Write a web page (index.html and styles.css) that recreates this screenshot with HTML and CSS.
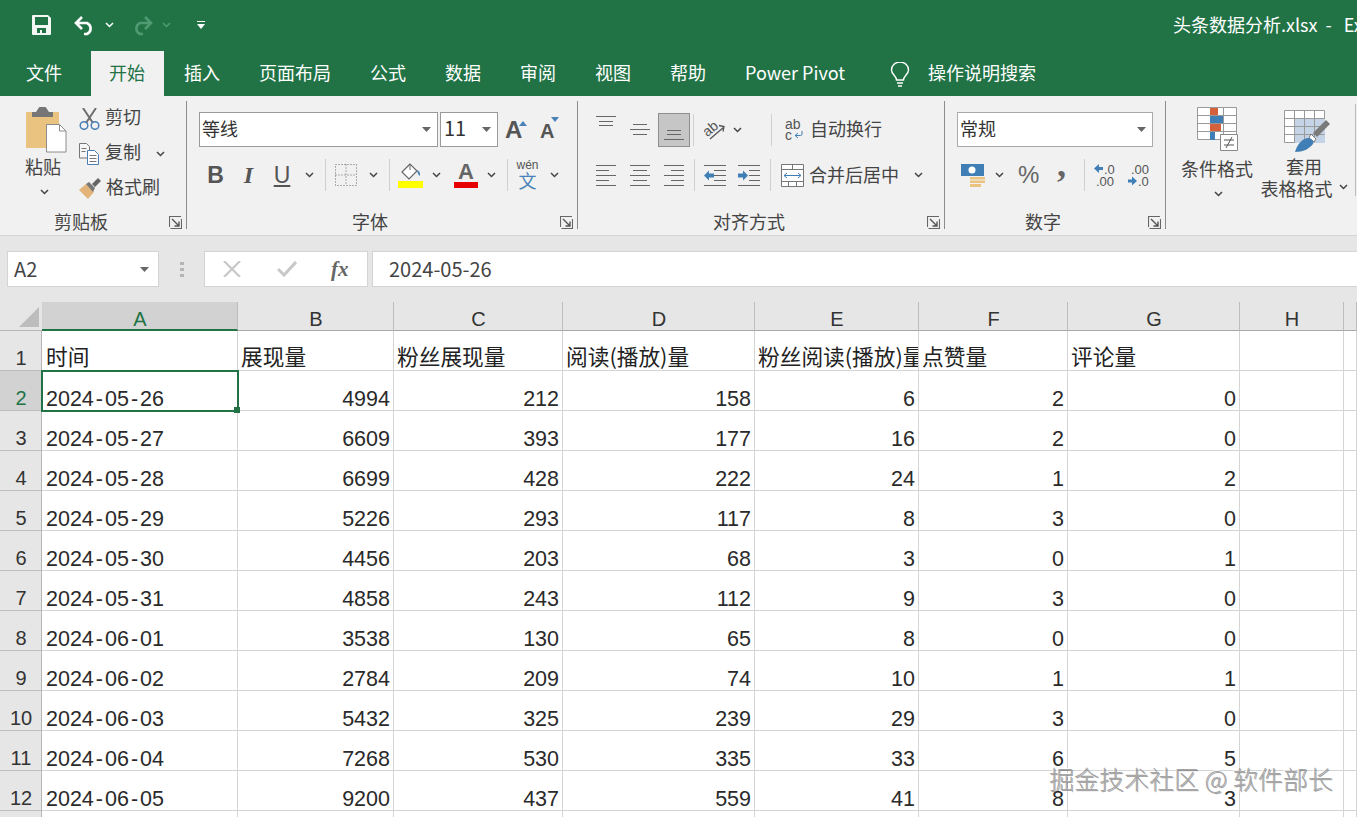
FILE: index.html
```html
<!DOCTYPE html>
<html lang="zh-CN">
<head>
<meta charset="utf-8">
<title>头条数据分析.xlsx - Excel</title>
<link rel="stylesheet" href="styles.css">
</head>
<body>
<svg class="defs" width="0" height="0" aria-hidden="true">
  <symbol id="chev" viewBox="0 0 9 6"><path d="M1 1l3.5 3.5L8 1" fill="none" stroke="currentColor" stroke-width="1.5"/></symbol>
  <symbol id="launch" viewBox="0 0 13 13"><path d="M.5 11V.5H12M1.5 12.5h11V3" fill="none" stroke="#666" stroke-width="1.1"/><path d="M3 3l7 7M10 5.5V10H5.5" fill="none" stroke="#555" stroke-width="1.4"/></symbol>
  <symbol id="drop" viewBox="0 0 9 5"><path d="M0 0h9L4.5 5z" fill="#666"/></symbol>
</svg>

<header class="titlebar">
  <div class="qat">
    <svg class="ic-save" width="20" height="20" viewBox="0 0 20 20"><path fill="#f3f8f5" fill-rule="evenodd" d="M1 0h15l3 3v16a1 1 0 0 1-1 1H1a1 1 0 0 1-1-1V1a1 1 0 0 1 1-1zM3 2v8h13V2zM5 13v5h3v-3h2v3h4v-5z"/></svg>
    <svg class="ic-undo" width="22" height="21" viewBox="0 0 22 21"><path d="M2 8h11a6 6 0 0 1 0 11h-3M8 2L2 8l6 6" fill="none" stroke="#fff" stroke-width="2.6"/></svg>
    <svg class="qat-chev" width="9" height="6"><use href="#chev"/></svg>
    <svg class="ic-redo" width="22" height="21" viewBox="0 0 22 21"><path d="M20 8H9a6 6 0 0 0 0 11h3M14 2l6 6-6 6" fill="none" stroke="#4f9a72" stroke-width="2.6"/></svg>
    <svg class="qat-chev dim" width="9" height="6"><use href="#chev"/></svg>
    <svg class="ic-more" width="8" height="8" viewBox="0 0 8 8"><path d="M0 .5h8" stroke="#fff"/><path d="M0 3h8L4 8z" fill="#fff"/></svg>
  </div>
  <div class="doc-title">头条数据分析.xlsx&nbsp;&nbsp;-&nbsp;&nbsp;&nbsp;Excel</div>
</header>

<nav class="tabs">
  <span class="tab tab-file">文件</span>
  <span class="tab tab-on">开始</span>
  <span class="tab">插入</span>
  <span class="tab">页面布局</span>
  <span class="tab">公式</span>
  <span class="tab">数据</span>
  <span class="tab">审阅</span>
  <span class="tab">视图</span>
  <span class="tab">帮助</span>
  <span class="tab">Power Pivot</span>
  <span class="tell">
    <svg width="20" height="26" viewBox="0 0 20 26"><path d="M6.500 18c0-4-5-5.500-5-10a8.500 8 0 0 1 17 0c0 4.500-5 6-5 10zM7 21h6M8 24h4" fill="none" stroke="#fff" stroke-width="1.400"/></svg>
    <span>操作说明搜索</span>
  </span>
</nav>

<section class="ribbon">
  <div class="group g-clip">
    <div class="clip-body">
      <div class="paste">
        <svg width="41" height="46" viewBox="0 0 41 46"><path d="M0 5h33v36H0z" fill="#e9c37f"/><path d="M6 5h4l2-3a5 5 0 0 1 9 0l2 3h4v5H6z" fill="#767676"/><path d="M20.500 17.500h13l6.500 6.500v21H20.500z" fill="#fff" stroke="#8c8c8c"/><path d="M33.500 17.500V24H40" fill="none" stroke="#8c8c8c"/></svg>
        <span class="paste-txt">粘贴</span>
        <svg class="chev" width="9" height="6"><use href="#chev"/></svg>
      </div>
      <div class="clip-cmds">
        <div class="cmd">
          <svg width="21" height="22" viewBox="0 0 21 22"><path d="M4 0l10 15M17 0L7 15" stroke="#6e6e6e" stroke-width="2" fill="none"/><circle cx="5" cy="17.500" r="3.800" fill="none" stroke="#4a7fb5" stroke-width="1.500"/><circle cx="16" cy="17.500" r="3.800" fill="none" stroke="#4a7fb5" stroke-width="1.500"/></svg>
          <span>剪切</span>
        </div>
        <div class="cmd">
          <svg width="21" height="22" viewBox="0 0 21 22"><path d="M.500.500h7l3 3V15H.500z" fill="#f6f6f6" stroke="#777"/><path d="M8.500 7.500h7l4 4v10h-11z" fill="#fff" stroke="#4a7fb5"/><path d="M10.500 12.500h7M10.500 15.500h7M10.500 18.500h7M2.500 5.500h5M2.500 8.500h4" stroke="#777"/></svg>
          <span>复制</span>
          <svg class="chev chev-copy" width="9" height="6"><use href="#chev"/></svg>
        </div>
        <div class="cmd">
          <svg width="22" height="21" viewBox="0 0 22 21"><path d="M0 12l7-6 8 8-6 7z" fill="#e2b47a"/><path d="M7 6l3-2 6 6-2 4z" fill="#777"/><path d="M13 6l6-6 3 3-6 6z" fill="#666"/></svg>
          <span>格式刷</span>
        </div>
      </div>
    </div>
    <div class="glabel"><span>剪贴板</span><svg width="13" height="13"><use href="#launch"/></svg></div>
  </div>

  <div class="group g-font">
    <div class="row r1">
      <div class="select sel-font"><span>等线</span><svg width="9" height="5"><use href="#drop"/></svg></div>
      <div class="select sel-size ml2"><span>11</span><svg width="9" height="5"><use href="#drop"/></svg></div>
      <span class="grow ml7">A<i class="tri"></i></span>
      <span class="shrink ml13">A<i class="tri tri-down"></i></span>
    </div>
    <div class="row r2">
      <b class="fmt w33">B</b><i class="fmt w33 fmt-i">I</i><u class="fmt w34">U</u>
      <svg class="chev ml6" width="9" height="6"><use href="#chev"/></svg>
      <span class="sep ml11"></span>
      <svg class="ml9" width="22" height="22" viewBox="0 0 22 22"><path d="M.500.500h21v21H.500zM11 .500v21M.500 11h21" fill="none" stroke="#666" stroke-dasharray="1 2"/></svg>
      <svg class="chev ml12" width="9" height="6"><use href="#chev"/></svg>
      <span class="sep ml11"></span>
      <svg class="ml8" width="25" height="25" viewBox="0 0 25 25"><path d="M12 1l-8 8 7 7 8-8z" fill="#fff" stroke="#666" stroke-width="1.200"/><path d="M12 1v6" stroke="#666"/><path d="M19 7c2 .5 3.500 2.500 3 6l-2-2z" fill="#3f7fb5"/><path d="M0 18h25v7H0z" fill="#ffff00"/></svg>
      <svg class="chev ml9" width="9" height="6"><use href="#chev"/></svg>
      <span class="color-a ml13">A</span>
      <svg class="chev ml9" width="9" height="6"><use href="#chev"/></svg>
      <span class="sep ml11"></span>
      <span class="wen ml9"><small>wén</small><em>文</em></span>
      <svg class="chev ml12" width="9" height="6"><use href="#chev"/></svg>
    </div>
    <div class="glabel"><span>字体</span><svg width="13" height="13"><use href="#launch"/></svg></div>
  </div>

  <div class="group g-align">
    <div class="row r1 pad11">
      <span class="al w34"><svg width="20" height="13" viewBox="0 0 20 13"><path d="M0 .500h20M3 5.500h14M3 9.500h14" stroke="#666"/></svg></span>
      <span class="al w34"><svg width="20" height="13" viewBox="0 0 20 13"><path d="M3 1.500h14M0 6.500h20M3 11.500h14" stroke="#666"/></svg></span>
      <span class="al al-on ml1"><svg width="20" height="10" viewBox="0 0 20 10"><path d="M3 .500h14M3 4.500h14M0 9.500h20" stroke="#666"/></svg></span>
      <span class="sep ml3"></span>
      <svg class="ml10" width="22" height="22" viewBox="0 0 22 22"><text x="0" y="15" class="svgt orient" transform="rotate(-40 6 12)">ab</text><path d="M6 20L20 8M15 6.500l5 1-1 5" fill="none" stroke="#555" stroke-width="1.300"/></svg>
      <svg class="chev ml7" width="9" height="6"><use href="#chev"/></svg>
      <span class="sep ml29"></span>
      <svg class="ml13" width="19" height="21" viewBox="0 0 19 21"><text x="0" y="10" class="svgt wrapt">ab</text><text x="0" y="21" class="svgt wrapt">c</text><path d="M17 12v3a1.500 1.500 0 0 1-1.500 1.500H10M13 14l-3 2.500 3 2.500" fill="none" stroke="#3f7fb5"/></svg>
      <span class="rtxt ml6">自动换行</span>
    </div>
    <div class="row r2 pad11">
      <span class="al w34"><svg width="20" height="21" viewBox="0 0 20 21"><path d="M0 .500h20M0 5.500h13M0 10.500h20M0 15.500h13M0 20.500h20" stroke="#666"/></svg></span>
      <span class="al w34"><svg width="20" height="21" viewBox="0 0 20 21"><path d="M0 .500h20M3 5.500h14M0 10.500h20M3 15.500h14M0 20.500h20" stroke="#666"/></svg></span>
      <span class="al w34"><svg width="20" height="21" viewBox="0 0 20 21"><path d="M0 .500h20M7 5.500h13M0 10.500h20M7 15.500h13M0 20.500h20" stroke="#666"/></svg></span>
      <span class="sep ml3"></span>
      <svg class="ml9" width="22" height="21" viewBox="0 0 22 21"><path d="M0 .500h22M10 5.500h12M10 10.500h12M10 15.500h12M0 20.500h22" stroke="#666"/><path d="M0 10.500l5-5v3h5v4H5v3z" fill="#3f7fb5"/></svg>
      <svg class="ml12" width="22" height="21" viewBox="0 0 22 21"><path d="M0 .500h22M11 5.500h11M11 10.500h11M11 15.500h11M0 20.500h22" stroke="#666"/><path d="M10 10.500l-5-5v3H0v4h5v3z" fill="#3f7fb5"/></svg>
      <span class="sep ml10"></span>
      <svg class="ml10" width="23" height="23" viewBox="0 0 23 23"><path d="M.500.500h22v22H.500z" fill="#fff"/><path d="M.500.500h22v22H.500zM.500 5.500h22M.500 17.500h22M11.500.500v5M7.500 17.500v5M15.500 17.500v5" fill="none" stroke="#777"/><path d="M3 11.500h17M6 9l-3 2.500L6 14M17 9l3 2.500L17 14" fill="none" stroke="#3f7fb5"/></svg>
      <span class="rtxt ml6">合并后居中</span>
      <svg class="chev ml15" width="9" height="6"><use href="#chev"/></svg>
    </div>
    <div class="glabel"><span>对齐方式</span><svg width="13" height="13"><use href="#launch"/></svg></div>
  </div>

  <div class="group g-num">
    <div class="row r1">
      <div class="select sel-num"><span>常规</span><svg width="9" height="5"><use href="#drop"/></svg></div>
    </div>
    <div class="row r2">
      <svg class="ml4" width="24" height="23" viewBox="0 0 24 23"><path d="M0 0h23v12H0z" fill="#3f7fb5"/><circle cx="11" cy="6" r="3.500" fill="#fff"/><path d="M9 13h15v2.500H9zM9 16.500h15V19H9zM9 20h11v3H9z" fill="#e9c37f"/></svg>
      <svg class="chev ml10" width="9" height="6"><use href="#chev"/></svg>
      <span class="pct ml14">%</span>
      <span class="comma ml19">,</span>
      <span class="sep ml15"></span>
      <svg class="ml9" width="24" height="24" viewBox="0 0 24 24"><path d="M0 5.500l5-4.500v3h4v3H5v3z" fill="#3f7fb5"/><text x="10" y="10.500" class="svgt dec">.0</text><text x="2" y="23" class="svgt dec">.00</text></svg>
      <svg class="ml10" width="24" height="24" viewBox="0 0 24 24"><text x="3" y="10.500" class="svgt dec">.00</text><path d="M9 18l-5-4.500v3H0v3h4v3z" fill="#3f7fb5"/><text x="10" y="23" class="svgt dec">.0</text></svg>
    </div>
    <div class="glabel"><span>数字</span><svg width="13" height="13"><use href="#launch"/></svg></div>
  </div>

  <div class="group g-style">
    <div class="st st-cond">
      <svg width="41" height="44" viewBox="0 0 41 44"><path d="M.500.500h39v32H.500zM.500 8.500h39M.500 16.500h39M.500 24.500h39M13.500.500v32M26.500.500v32" fill="#fff" stroke="#999"/><path d="M13 1h8v7h-8zM13 17h11v7H13z" fill="#d5613c"/><path d="M13 9h13v7H13zM13 25h5v8h-5z" fill="#3f7fb5"/><path d="M23.500 27.500h17v16h-17z" fill="#fff" stroke="#888"/><path d="M27 33h10M27 38h10M35 30l-6 11" stroke="#555" fill="none"/></svg>
      <span class="st-t st-t1">条件格式</span>
      <svg class="chev" width="9" height="6"><use href="#chev"/></svg>
    </div>
    <div class="st st-table">
      <svg width="46" height="42" viewBox="0 0 46 42"><path d="M.500.500h40v32H.500z" fill="#fff" stroke="#999"/><path d="M11 9h30v24H11z" fill="#c5d3e6"/><path d="M.500 8.500h40M.500 16.500h40M.500 24.500h40M10.500.500v32M20.500.500v32M30.500.500v32" fill="none" stroke="#999"/><path d="M29 23l13-13 4 4-13 13z" fill="#7a7a7a"/><path d="M27 24l5 5-2 3-5-4z" fill="#fff" stroke="#777"/><path d="M11 42c2-7 7-14 14-14 3 1 5 3 4 6-4 5-10 8-18 8z" fill="#3f7fb5"/></svg>
      <span class="st-t st-t1">套用</span>
      <span class="st-t">表格格式<svg class="chev ml6" width="9" height="6"><use href="#chev"/></svg></span>
    </div>
    <span class="st-next"></span>
  </div>
</section>

<section class="formula">
  <div class="namebox"><span>A2</span><svg width="9" height="5"><use href="#drop"/></svg></div>
  <div class="grip"><i></i><i></i><i></i></div>
  <div class="fx-box">
    <svg width="18" height="16" viewBox="0 0 18 16"><path d="M1 0l16 16M17 0L1 16" stroke="#c8c8c8" stroke-width="2.200"/></svg>
    <svg width="20" height="16" viewBox="0 0 20 16"><path d="M1 8l6 6L19 1" fill="none" stroke="#c8c8c8" stroke-width="3"/></svg>
    <span class="fx">fx</span>
  </div>
  <div class="finput">2024-05-26</div>
</section>

<section class="sheet">
  <div class="corner"><i></i></div>
  <div class="ch ch-on">A</div><div class="ch">B</div><div class="ch">C</div><div class="ch">D</div><div class="ch">E</div><div class="ch">F</div><div class="ch">G</div><div class="ch">H</div><div class="ch"></div>

  <div class="rh">1</div><div class="c">时间</div><div class="c">展现量</div><div class="c">粉丝展现量</div><div class="c">阅读(播放)量</div><div class="c">粉丝阅读(播放)量</div><div class="c">点赞量</div><div class="c">评论量</div><div class="c"></div><div class="c"></div>

  <div class="rh rh-on">2</div><div class="c d sel">2024<s>-</s>05<s>-</s>26<i class="handle"></i></div><div class="c n">4994</div><div class="c n">212</div><div class="c n">158</div><div class="c n">6</div><div class="c n">2</div><div class="c n">0</div><div class="c"></div><div class="c"></div>
  <div class="rh">3</div><div class="c d">2024<s>-</s>05<s>-</s>27</div><div class="c n">6609</div><div class="c n">393</div><div class="c n">177</div><div class="c n">16</div><div class="c n">2</div><div class="c n">0</div><div class="c"></div><div class="c"></div>
  <div class="rh">4</div><div class="c d">2024<s>-</s>05<s>-</s>28</div><div class="c n">6699</div><div class="c n">428</div><div class="c n">222</div><div class="c n">24</div><div class="c n">1</div><div class="c n">2</div><div class="c"></div><div class="c"></div>
  <div class="rh">5</div><div class="c d">2024<s>-</s>05<s>-</s>29</div><div class="c n">5226</div><div class="c n">293</div><div class="c n">117</div><div class="c n">8</div><div class="c n">3</div><div class="c n">0</div><div class="c"></div><div class="c"></div>
  <div class="rh">6</div><div class="c d">2024<s>-</s>05<s>-</s>30</div><div class="c n">4456</div><div class="c n">203</div><div class="c n">68</div><div class="c n">3</div><div class="c n">0</div><div class="c n">1</div><div class="c"></div><div class="c"></div>
  <div class="rh">7</div><div class="c d">2024<s>-</s>05<s>-</s>31</div><div class="c n">4858</div><div class="c n">243</div><div class="c n">112</div><div class="c n">9</div><div class="c n">3</div><div class="c n">0</div><div class="c"></div><div class="c"></div>
  <div class="rh">8</div><div class="c d">2024<s>-</s>06<s>-</s>01</div><div class="c n">3538</div><div class="c n">130</div><div class="c n">65</div><div class="c n">8</div><div class="c n">0</div><div class="c n">0</div><div class="c"></div><div class="c"></div>
  <div class="rh">9</div><div class="c d">2024<s>-</s>06<s>-</s>02</div><div class="c n">2784</div><div class="c n">209</div><div class="c n">74</div><div class="c n">10</div><div class="c n">1</div><div class="c n">1</div><div class="c"></div><div class="c"></div>
  <div class="rh">10</div><div class="c d">2024<s>-</s>06<s>-</s>03</div><div class="c n">5432</div><div class="c n">325</div><div class="c n">239</div><div class="c n">29</div><div class="c n">3</div><div class="c n">0</div><div class="c"></div><div class="c"></div>
  <div class="rh">11</div><div class="c d">2024<s>-</s>06<s>-</s>04</div><div class="c n">7268</div><div class="c n">530</div><div class="c n">335</div><div class="c n">33</div><div class="c n">6</div><div class="c n">5</div><div class="c"></div><div class="c"></div>
  <div class="rh">12</div><div class="c d">2024<s>-</s>06<s>-</s>05</div><div class="c n">9200</div><div class="c n">437</div><div class="c n">559</div><div class="c n">41</div><div class="c n">8</div><div class="c n">3</div><div class="c"></div><div class="c"></div>
  <div class="rh"></div><div class="c"></div><div class="c"></div><div class="c"></div><div class="c"></div><div class="c"></div><div class="c"></div><div class="c"></div><div class="c"></div><div class="c"></div>
  <div class="watermark">掘金技术社区 @ 软件部长</div>
</section>
</body>
</html>
```
FILE: styles.css
```css
* { box-sizing: border-box; }
html, body { margin: 0; height: 100%; overflow: hidden; }
body {
  width: 1357px; height: 817px;
  font-family: "Noto Sans CJK SC", "Liberation Sans", sans-serif;
  font-weight: 400; color: #444; background: #fff;
}
.defs { position: absolute; }
svg { display: block; flex: none; }
.chev { color: #444; }
.ml1 { margin-left: 1px; } .ml2 { margin-left: 2px; } .ml3 { margin-left: 3px; }
.ml4 { margin-left: 4px; } .ml6 { margin-left: 6px; } .ml7 { margin-left: 7px; }
.ml8 { margin-left: 8px; } .ml9 { margin-left: 9px; } .ml10 { margin-left: 10px; }
.ml11 { margin-left: 11px; } .ml12 { margin-left: 12px; } .ml13 { margin-left: 13px; }
.ml14 { margin-left: 14px; } .ml15 { margin-left: 15px; }
.ml19 { margin-left: 19px; } .ml29 { margin-left: 29px; }
.w33 { width: 33px; } .w34 { width: 34px; }

/* title bar */
.titlebar {
  height: 48px; background: #217346; display: flex; align-items: center;
  justify-content: space-between; padding: 2px 0 0 32px; overflow: hidden; color: #fff;
}
.qat { display: flex; align-items: center; }
.ic-undo { margin-left: 22px; }
.qat-chev { color: #fff; margin-left: 9px; }
.qat-chev.dim { color: #4f9a72; }
.ic-redo { margin-left: 17px; }
.ic-redo + .dim { margin-left: 9px; }
.ic-more { margin-left: 26px; }
.doc-title { width: 184px; white-space: nowrap; font-size: 18px; line-height: 24px; margin-bottom: 2px; color: #fff; overflow: hidden; flex: none; }

.tabs {
  height: 48px; background: #217346; display: flex; align-items: flex-end;
  padding-left: 8px; gap: 2px; color: #fff; font-size: 18px;
}
.tab { height: 45px; line-height: 42px; padding: 0 19px 0 18px; white-space: nowrap; }
.tab-file { margin-right: 8px; }
.tab-on { background: #f1f1f1; color: #217346; }
.tell { height: 45px; display: flex; align-items: center; margin-left: 24px; gap: 18px; line-height: 42px; }
.tell svg { margin-top: 2px; }
.tell span { margin-bottom: 4px; }

/* ribbon */
.ribbon {
  height: 140px; background: #f1f1f1; border-bottom: 1px solid #d5d5d5;
  padding: 5px 0 6px; display: flex; font-size: 18px; color: #444;
}
.group { display: flex; flex-direction: column; border-right: 1px solid #8c8c8c; height: 128px; flex: none; }
.g-clip { width: 187px; }
.g-font { width: 391px; padding-left: 12px; padding-top: 11px; }
.g-align { width: 367px; padding-top: 11px; }
.g-num { width: 221px; padding-left: 12px; padding-top: 11px; }
.g-style { flex: 1; width: auto; border-right: 0; flex-direction: row; padding-left: 8px; }

.glabel {
  margin-top: auto; height: 14px; display: flex; align-items: flex-start;
  line-height: 12px; font-size: 18px; padding-right: 4px; margin-left: 0;
}
.g-font .glabel, .g-num .glabel { margin-left: -12px; }
.glabel span { flex: 1; text-align: center; }
.glabel svg { margin-left: 7px; margin-top: 1px; }

.clip-body { display: flex; }
.paste { width: 64px; margin-left: 12px; padding-top: 6px; display: flex; flex-direction: column; align-items: center; }
.paste > svg:first-child { margin-left: 4px; }
.paste-txt { line-height: 18px; margin-top: 4px; height: 22px; margin-right: 2px; }
.paste .chev { margin-top: 10px; }
.clip-cmds { margin-left: 3px; display: flex; flex-direction: column; }
.cmd { height: 35px; display: flex; align-items: center; gap: 5px; }
.cmd span { margin-bottom: 6px; }
.chev-copy { margin-left: 10px; }

.row { display: flex; align-items: center; }
.r1 { height: 35px; }
.r2 { height: 34px; margin-top: 11px; }
.pad11 { padding-left: 11px; }

.select {
  height: 35px; background: #fff; border: 1px solid #999; display: flex; align-items: center;
  justify-content: space-between; padding: 0 6px 0 2px; color: #333; font-size: 18px; flex: none;
}
.select span { margin-bottom: 4px; }
.sel-font { width: 239px; }
.sel-size { width: 58px; font-size: 20px; padding-left: 3px; }
.sel-num { width: 196px; padding-left: 2px; border-color: #aaa; }

.grow, .shrink { font-family: "Liberation Sans", sans-serif; font-weight: 700; color: #555; display: flex; width: 22px; line-height: 1; }
.grow { font-size: 24px; width: 22px; }
.shrink { font-size: 20px; width: 21px; margin-top: 3px; }
.tri { display: block; width: 0; height: 0; margin: 3px 0 0 -3px; border: 4px solid transparent; border-top: 0; border-bottom: 5px solid #4a82b8; }
.tri-down { border-top: 5px solid #4a82b8; border-bottom: 0; margin-top: -4px; }

.fmt { font-family: "Liberation Sans", sans-serif; font-size: 23px; color: #555; text-align: center; flex: none; line-height: 1; }
.fmt-i { font-family: "Liberation Serif", serif; font-size: 24px; font-weight: 700; }
.sep { display: block; width: 1px; height: 32px; background: #d0d0d0; flex: none; }
.color-a {
  width: 24px; flex: none; font: 700 22px/20px "Liberation Sans", sans-serif; color: #666;
  text-align: center; border-bottom: 6px solid #e60000;
}
.wen { display: flex; flex-direction: column; align-items: center; width: 21px; flex: none; }
.wen small { font-size: 12px; line-height: 11px; color: #555; font-family: "Liberation Sans", sans-serif; }
.wen em { font-style: normal; font-size: 18px; line-height: 19px; color: #4a82b8; }

.al { display: flex; align-items: center; justify-content: center; flex: none; height: 34px; }
.al-on { width: 32px; height: 34px; background: #c6c6c6; border: 1px solid #8f8f8f; align-items: flex-end; padding-bottom: 6px; }
.r1 .al:first-child { align-items: flex-start; padding-top: 3px; }
.rtxt { white-space: nowrap; flex: none; color: #444; }
.r1 .rtxt { margin-bottom: 4px; }
.r2 .rtxt { margin-bottom: 2px; }
.r2 svg + .rtxt { margin-left: 5px; }
.svgt { font-family: "Liberation Sans", sans-serif; fill: #555; }
.orient { font-size: 14px; }
.wrapt { font-size: 14px; }
.dec { font-size: 13px; fill: #555; }
.pct { font: 400 24px/1 "Liberation Sans", sans-serif; width: 20px; color: #666; letter-spacing: -2px; }
.comma { font: 700 36px/1 "Liberation Serif", serif; width: 12px; color: #666; margin-top: -22px; }

.st { display: flex; flex-direction: column; align-items: center; flex: none; }
.st-cond { width: 86px; padding-top: 6px; }
.st-table { width: 88px; padding-top: 9px; }
.st-table > svg:first-child { margin-left: 5px; }
.st-t { line-height: 20px; display: flex; align-items: flex-start; white-space: nowrap; height: 22px; }
.st-t svg { margin-top: 6px; }
.st-cond .st-t1 { margin-top: 7px; }
.st-cond .chev { margin-top: 11px; margin-left: 3px; }
.st-table .st-t1 { margin-top: 4px; }
.st-next { width: 1px; height: 92px; margin: 3px 0 0 7px; background: #bbb; }

/* formula bar */
.formula { height: 66px; background: #e6e6e6; display: flex; padding: 15px 0 0 7px; }
.namebox {
  width: 152px; height: 36px; background: #fff; border: 1px solid #d4d4d4; display: flex; align-items: center;
  justify-content: space-between; padding: 0 9px 0 6px; font-size: 20px; color: #444;
}
.namebox span { margin-bottom: 2px; }
.grip { width: 45px; height: 36px; display: flex; flex-direction: column; align-items: center; justify-content: center; gap: 3px; }
.grip i { width: 4px; height: 3px; background: #b5b5b5; display: block; }
.fx-box {
  width: 164px; height: 36px; background: #fff; border: 1px solid #d4d4d4; display: flex; align-items: center;
  padding-left: 18px; gap: 36px; flex: none;
}
.fx { font: italic 700 21px/1 "Liberation Serif", serif; color: #666; margin-left: -2px; }
.finput {
  flex: 1; height: 36px; margin-left: 4px; background: #fff; border: 1px solid #d4d4d4; border-right: 0;
  padding-left: 16px; line-height: 33px; font-size: 20px; color: #444;
}

/* sheet */
.sheet {
  position: relative; height: 515px; overflow: hidden; display: grid;
  grid-template-columns: 42px 196px 156px 169px 192px 164px 149px 172px 104px 13px;
  grid-template-rows: 29px repeat(13, 40px); background: #fff;
  font: 400 21.700px/1 "Noto Sans CJK SC", sans-serif; color: #222;
}
.corner { background: #e6e6e6; border-bottom: 1px solid #b5b5b5; display: flex; align-items: flex-end; justify-content: flex-end; padding: 0 3px 3px 0; }
.corner i { display: block; width: 0; height: 0; border-style: solid; border-width: 0 0 20px 20px; border-color: transparent transparent #bdbdbd transparent; }
.ch {
  background: #e6e6e6; border-right: 1px solid #bdbdbd; border-bottom: 1px solid #a8a8a8;
  text-align: center; font: 400 20px/28px "Liberation Sans", sans-serif; color: #333; padding: 3px 0 0 1px;
}
.ch-on { background: #d2d2d2; color: #217346; border-bottom: 2px solid #217346; }
.rh {
  background: #e6e6e6; border-right: 1px solid #b5b5b5; border-bottom: 1px solid #bdbdbd;
  text-align: center; font: 400 20px/36px "Liberation Sans", sans-serif; color: #333; padding: 9px 0 0 1px; overflow: hidden;
}
.rh-on { background: #d2d2d2; color: #217346; }
.c {
  border-right: 1px solid #d4d4d4; border-bottom: 1px solid #d4d4d4; padding: 12px 3px 0 3px;
  line-height: 26px; white-space: nowrap; overflow: hidden; position: relative;
}
.c:nth-child(10n+2) { padding-left: 4px; }
.n, .d { font-family: "Liberation Sans", sans-serif; font-size: 21.500px; padding-top: 15px; color: #2a2a2a; }
.n { text-align: right; }
.d s { text-decoration: none; margin: 0 2px; }
.sel { overflow: visible; outline: 2px solid #217346; outline-offset: -1px; z-index: 2; }
.handle { position: absolute; right: -3px; bottom: -3px; width: 6px; height: 6px; background: #217346; }
.watermark {
  position: absolute; left: 1049px; bottom: 24px; z-index: 3; white-space: nowrap;
  font: 300 25px/30px "Noto Sans CJK SC", sans-serif; color: #a6a6a6;
  text-shadow: 1px 1px 0 rgba(0,0,0,.35), -1px -1px 0 rgba(255,255,255,.8);
}
```
